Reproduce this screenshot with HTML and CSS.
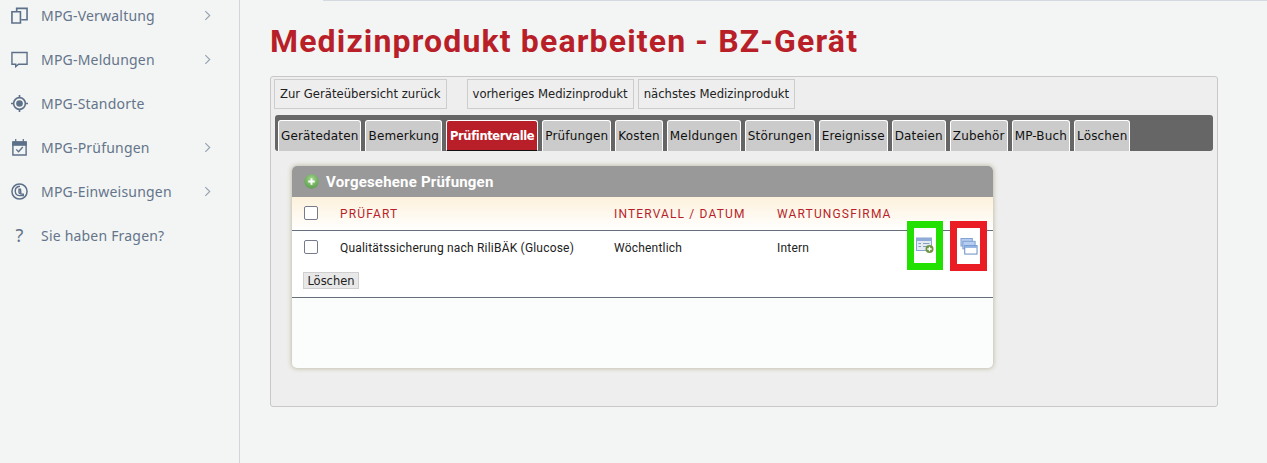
FILE: index.html
```html
<!DOCTYPE html>
<html lang="de">
<head>
<meta charset="utf-8">
<title>Medizinprodukt bearbeiten</title>
<link rel="stylesheet" href="styles.css">
</head>
<body>
<div class="topline"></div>
<div class="app">
  <nav class="sidebar">
    <a class="nav-item"><svg class="nav-icon" viewBox="0 0 18 18"><path d="M6 4.500V1.500h11v12H11M1 5h9v12H1z" fill="none" stroke="#5d7089" stroke-width="1.700"/></svg><span class="nav-label">MPG-Verwaltung</span><svg class="chev" viewBox="0 0 8 12"><path d="M1.500 1 6.500 6l-5 5" fill="none" stroke="#9aa5b2" stroke-width="1.400"/></svg></a>
    <a class="nav-item"><svg class="nav-icon" viewBox="0 0 18 18"><path d="M1 1.500h16v12.500H8l-3 2.500V14H1z" fill="none" stroke="#5d7089" stroke-width="1.500"/></svg><span class="nav-label">MPG-Meldungen</span><svg class="chev" viewBox="0 0 8 12"><path d="M1.500 1 6.500 6l-5 5" fill="none" stroke="#9aa5b2" stroke-width="1.400"/></svg></a>
    <a class="nav-item"><svg class="nav-icon" viewBox="0 0 18 18"><circle cx="9" cy="9" r="6.200" fill="none" stroke="#5d7089" stroke-width="1.700"/><circle cx="9" cy="9" r="3.500" fill="#5d7089"/><path d="M9 0v3M9 15v3M0 9h3M15 9h3" stroke="#5d7089" stroke-width="1.700"/></svg><span class="nav-label">MPG-Standorte</span></a>
    <a class="nav-item"><svg class="nav-icon" viewBox="0 0 18 18"><path d="M2 3.500h14v13.500H2z" fill="none" stroke="#5d7089" stroke-width="1.500"/><path d="M2 3h14v3.500H2zM5 0v3M13 0v3" fill="#5d7089" stroke="#5d7089" stroke-width="1.300"/><path d="M5.500 11l2.500 2.500 4.500-5" fill="none" stroke="#5d7089" stroke-width="1.400"/></svg><span class="nav-label">MPG-Prüfungen</span><svg class="chev" viewBox="0 0 8 12"><path d="M1.500 1 6.500 6l-5 5" fill="none" stroke="#9aa5b2" stroke-width="1.400"/></svg></a>
    <a class="nav-item"><svg class="nav-icon" viewBox="0 0 18 18"><circle cx="9" cy="9" r="8" fill="none" stroke="#5d7089" stroke-width="1.600"/><path d="M9.500 3.500C6.200 3.800 4.300 6.200 4.500 9c.3 2.900 2.500 4.500 5 4.400h3.500v-1.600h-2.500L10 6.500H8.500v3.800l1 1.200" fill="none" stroke="#5d7089" stroke-width="1.500"/></svg><span class="nav-label">MPG-Einweisungen</span><svg class="chev" viewBox="0 0 8 12"><path d="M1.500 1 6.500 6l-5 5" fill="none" stroke="#9aa5b2" stroke-width="1.400"/></svg></a>
    <a class="nav-item"><span class="nav-icon nav-q">?</span><span class="nav-label">Sie haben Fragen?</span></a>
  </nav>
  <main class="main">
    <h1 class="title">Medizinprodukt bearbeiten - BZ-Gerät</h1>
    <section class="panel">
      <div class="actions">
        <a class="action">Zur Geräteübersicht zurück</a>
        <a class="action action-gap">vorheriges Medizinprodukt</a>
        <a class="action">nächstes Medizinprodukt</a>
      </div>
      <div class="tabs">
        <a class="tab">Gerätedaten</a>
        <a class="tab">Bemerkung</a>
        <a class="tab active">Prüfintervalle</a>
        <a class="tab">Prüfungen</a>
        <a class="tab">Kosten</a>
        <a class="tab">Meldungen</a>
        <a class="tab">Störungen</a>
        <a class="tab">Ereignisse</a>
        <a class="tab">Dateien</a>
        <a class="tab">Zubehör</a>
        <a class="tab">MP-Buch</a>
        <a class="tab">Löschen</a>
      </div>
      <div class="card">
        <div class="card-head">
          <svg class="plus" viewBox="0 0 14 14"><defs><radialGradient id="plusFill" cx=".5" cy=".35" r=".7"><stop offset="0" stop-color="#a5d890"/><stop offset="1" stop-color="#559a45"/></radialGradient></defs><circle cx="7" cy="7" r="6.700" fill="url(#plusFill)"/><path d="M7 4v6M4 7h6" stroke="#fff" stroke-width="1.700"/></svg>
          <span>Vorgesehene Prüfungen</span>
        </div>
        <div class="row row-head">
          <span class="cell-check"><span class="check"></span></span>
          <span class="cell-art">PRÜFART</span>
          <span class="cell-int">INTERVALL / DATUM</span>
          <span class="cell-firm">WARTUNGSFIRMA</span>
        </div>
        <div class="row row-body">
          <span class="cell-check"><span class="check"></span></span>
          <span class="cell-art">Qualitätssicherung nach RiliBÄK (Glucose)</span>
          <span class="cell-int">Wöchentlich</span>
          <span class="cell-firm">Intern</span>
        </div>
        <div class="card-actions"><button class="del" type="button">Löschen</button></div>
        <div class="card-foot"></div>
        <div class="mark mark-green">
          <svg viewBox="0 0 18 16" class="mark-icon"><rect x=".5" y=".5" width="15" height="12.500" fill="#e3eaf4" stroke="#8aa5cf"/><rect x=".5" y=".5" width="15" height="3" fill="#8fabd6"/><path d="M2.500 6h2.500M7 6h6.500M2.500 9h2.500M7 9h4" stroke="#8aa0b8"/><circle cx="13.500" cy="11.500" r="4" fill="#6f9440"/><path d="M13.500 9.300v4.400M11.300 11.500h4.400" stroke="#fff" stroke-width="1.300"/></svg>
        </div>
        <div class="mark mark-red">
          <svg viewBox="0 0 18 18" class="mark-icon"><rect x=".5" y=".5" width="12" height="8" fill="#b5cdf0" stroke="#7f9fd0"/><rect x="2.500" y="3.500" width="13" height="8" fill="#b5cdf0" stroke="#7f9fd0"/><rect x="4.500" y="8" width="13" height="9" fill="#fff" stroke="#5f86c0"/><rect x="4.500" y="8" width="13" height="2.500" fill="#92b3e2"/></svg>
        </div>
      </div>
    </section>
  </main>
</div>
</body>
</html>
```
FILE: styles.css
```css
* { box-sizing: border-box; }
html, body { margin: 0; height: 463px; overflow: hidden; }
body { background: #f3f5f4; font-family: "Noto Sans", sans-serif; position: relative; }
.topline { position: absolute; left: 323px; right: 0; top: 0; height: 1px; background: #d5dae2; }
.app { display: flex; height: 463px; }
.sidebar { width: 240px; border-right: 1px solid #d4d7d8; display: flex; flex-direction: column; gap: 12px; flex: none; margin-top: -1px; }
.nav-item { display: flex; align-items: center; height: 32px; padding-left: 11px; color: #64748a; font-size: 14px; letter-spacing: .2px; }
.nav-icon { width: 17px; height: 17px; flex: none; margin-right: 13px; }
.nav-q { font-size: 18px; text-align: center; line-height: 17px; }
.nav-label { width: 163px; white-space: nowrap; }
.chev { width: 7px; height: 11px; }
.main { padding: 0 49px 0 30px; flex: 1; min-width: 0; }
.title { margin: 24px 0 18px; height: 34px; line-height: 34px; font-family: "Roboto", sans-serif; font-size: 32px; font-weight: 700; color: #b81f28; letter-spacing: 1.150px; white-space: nowrap; }
.panel { height: 331px; background: #eeeeee; border: 1px solid #c8c8c8; border-radius: 3px; padding: 2px 4px 0 3px; }
.actions { display: flex; gap: 4px; height: 30px; }
.action { border: 1px solid #cdcdcd; height: 30px; line-height: 28px; padding: 0 5px; font-family: "DejaVu Sans", sans-serif; font-size: 11.650px; color: #222; white-space: nowrap; }
.action-gap { margin-left: 16px; }
.tabs { margin: 6px 0 0 1px; height: 36px; background: #666; border-radius: 3px; padding: 5px 0 0 3px; display: flex; gap: 4px; }
.tab { height: 31px; line-height: 31px; background: #cbcbcb; border: 1px solid #fff; border-bottom: 0; border-radius: 3px 3px 0 0; padding: 0 2px; font-family: "DejaVu Sans", sans-serif; font-size: 12px; letter-spacing: .16px; color: #111; white-space: nowrap; }
.tab.active { background: #b81f28; color: #fff; font-weight: 700; font-size: 11.500px; letter-spacing: -.36px; border: 1px solid #fff; border-bottom: 1px solid #111; padding: 0 3px; }
.card { position: relative; margin: 15px 0 0 18px; width: 701px; height: 202px; background: #fbfdfc; border-radius: 5px; box-shadow: 0 0 4px 1px #c5c2ae; }
.card-head { height: 31px; background: #999; border-radius: 5px 5px 0 0; color: #fff; font-family: "Roboto", sans-serif; font-weight: 700; font-size: 15px; letter-spacing: .2px; display: flex; align-items: center; padding-left: 12px; gap: 7px; }
.plus { width: 15px; height: 15px; }
.row { display: flex; align-items: center; font-family: "Roboto", sans-serif; }
.row-head { height: 34px; background: linear-gradient(#fdf1dc, #fff); border-bottom: 1px solid #66707c; color: #b81f28; font-size: 12px; letter-spacing: 1.150px; }
.row-body { height: 33px; background: #fff; font-size: 12px; letter-spacing: .2px; color: #222; }
.cell-check { width: 48px; padding: 0 0 2px 12px; display: flex; }
.check { width: 14px; height: 14px; border: 1.500px solid #777a8a; border-radius: 2px; background: #fff; }
.cell-art { width: 274px; white-space: nowrap; }
.cell-int { width: 163px; white-space: nowrap; }
.cell-firm { white-space: nowrap; }
.card-actions { background: #fff; height: 34px; border-bottom: 1px solid #66707c; padding: 8px 0 0 11px; }
.del { display: block; height: 17px; width: 56px; padding: 0; background: #e8e8e8; border: 1px solid #cfcfcf; font-family: "DejaVu Sans", sans-serif; font-size: 11.500px; line-height: 14px; color: #222; }
.mark { position: absolute; top: 55px; width: 36px; height: 49px; border: 7px solid; background: #fff; display: flex; align-items: center; justify-content: center; }
.mark-green { left: 615px; border-color: #22e000; }
.mark-red { left: 658px; width: 37px; border-color: #ea1c24; height: 50px; }
.mark-icon { width: 18px; height: 17px; }
```
